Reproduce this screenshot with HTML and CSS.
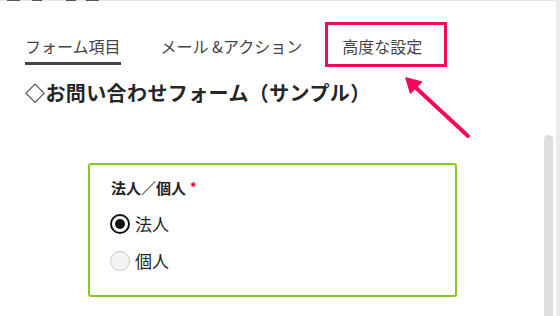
FILE: index.html
```html
<!DOCTYPE html>
<html lang="ja">
<head>
<meta charset="utf-8">
<link rel="stylesheet" href="styles.css">
</head>
<body>
<div class="frame">
  <div class="main">
    <div class="topedge">
      <span class="stub s1"></span><span class="stub s2"></span><span class="stub s3"></span><span class="stub s4"></span>
    </div>
    <nav class="tabs">
      <span class="tab active">フォーム項目</span>
      <span class="tab">メール &amp;アクション</span>
      <span class="tab">高度な設定</span>
    </nav>
    <h2 class="title">◇お問い合わせフォーム（サンプル）</h2>
    <div class="formbox">
      <div class="label">法人／個人<span class="req">*</span></div>
      <div class="option"><span class="radio on"></span><span class="otext">法人</span></div>
      <div class="option"><span class="radio"></span><span class="otext">個人</span></div>
    </div>
    <div class="thumb"></div>
  </div>
  <div class="gutter"></div>
  <div class="highlight"></div>
  <svg class="arrow" width="560" height="316" viewBox="0 0 560 316">
    <line x1="468" y1="136" x2="414" y2="86" stroke="#f8085c" stroke-width="4" stroke-linecap="round"/>
    <polygon points="406,78 421.5,82 410.5,93" fill="#f8085c" stroke="#f8085c" stroke-width="1.5" stroke-linejoin="round"/>
  </svg>
</div>
</body>
</html>
```
FILE: styles.css
```css
html, body {
  margin: 0;
  padding: 0;
  background: #fff;
}
body {
  font-family: "Noto Sans CJK JP", "Noto Sans", sans-serif;
  color: #222;
}
.frame {
  position: relative;
  width: 560px;
  height: 316px;
  display: flex;
  overflow: hidden;
}
.main {
  position: relative;
  flex: 1;
  display: flex;
  flex-direction: column;
}
.gutter {
  width: 4px;
  background: #ececee;
}
.topedge {
  position: relative;
  height: 1px;
  background: #e6e6e8;
  display: flex;
}
.stub {
  height: 1px;
  background: #555;
}
.s1 { margin-left: 7px; width: 13px; }
.s2 { margin-left: 12px; width: 10px; }
.s3 { margin-left: 24px; width: 10px; }
.s4 { margin-left: 10px; width: 13px; }

.tabs {
  display: flex;
  gap: 40px;
  padding: 33px 0 0 25px;
  font-size: 16px;
  line-height: 24px;
  color: #444;
}
.tab {
  padding-bottom: 4px;
  border-bottom: 3px solid transparent;
}
.tab.active {
  border-bottom-color: #444;
}
.title {
  margin: 14px 0 0 25px;
  font-size: 20px;
  line-height: 28px;
  font-weight: 700;
  letter-spacing: 0.4px;
  color: #262626;
}
.formbox {
  margin: 56px 0 0 88px;
  width: 369px;
  height: 134px;
  box-sizing: border-box;
  border: 2px solid #88c920;
  border-radius: 3px;
  padding: 12px 0 0 21px;
}
.label {
  font-size: 15px;
  line-height: 22px;
  font-weight: 700;
  color: #222;
  margin-bottom: 5px;
}
.req {
  color: #e8001c;
  font-size: 13px;
  margin-left: 4px;
  position: relative;
  top: -2px;
}
.option {
  display: flex;
  align-items: center;
  gap: 5px;
  height: 37px;
}
.radio {
  width: 20px;
  height: 20px;
  box-sizing: border-box;
  border-radius: 50%;
  border: 1.5px solid #c9c9c9;
  background: #f4f4f4;
  margin-left: -1px;
  display: flex;
  align-items: center;
  justify-content: center;
}
.radio.on {
  border: 2.5px solid #111;
  background: #fff;
}
.radio.on::after {
  content: "";
  width: 10px;
  height: 10px;
  border-radius: 50%;
  background: #111;
}
.otext {
  font-size: 17px;
  line-height: 24px;
  color: #222;
}
.thumb {
  position: absolute;
  left: 544px;
  top: 135px;
  width: 9px;
  height: 200px;
  border-radius: 5px 5px 0 0;
  background: #dedede;
}
.highlight {
  position: absolute;
  left: 325px;
  top: 22px;
  width: 122px;
  height: 45px;
  box-sizing: border-box;
  border: 3px solid #f8085c;
}
.arrow {
  position: absolute;
  left: 0;
  top: 0;
}
```
